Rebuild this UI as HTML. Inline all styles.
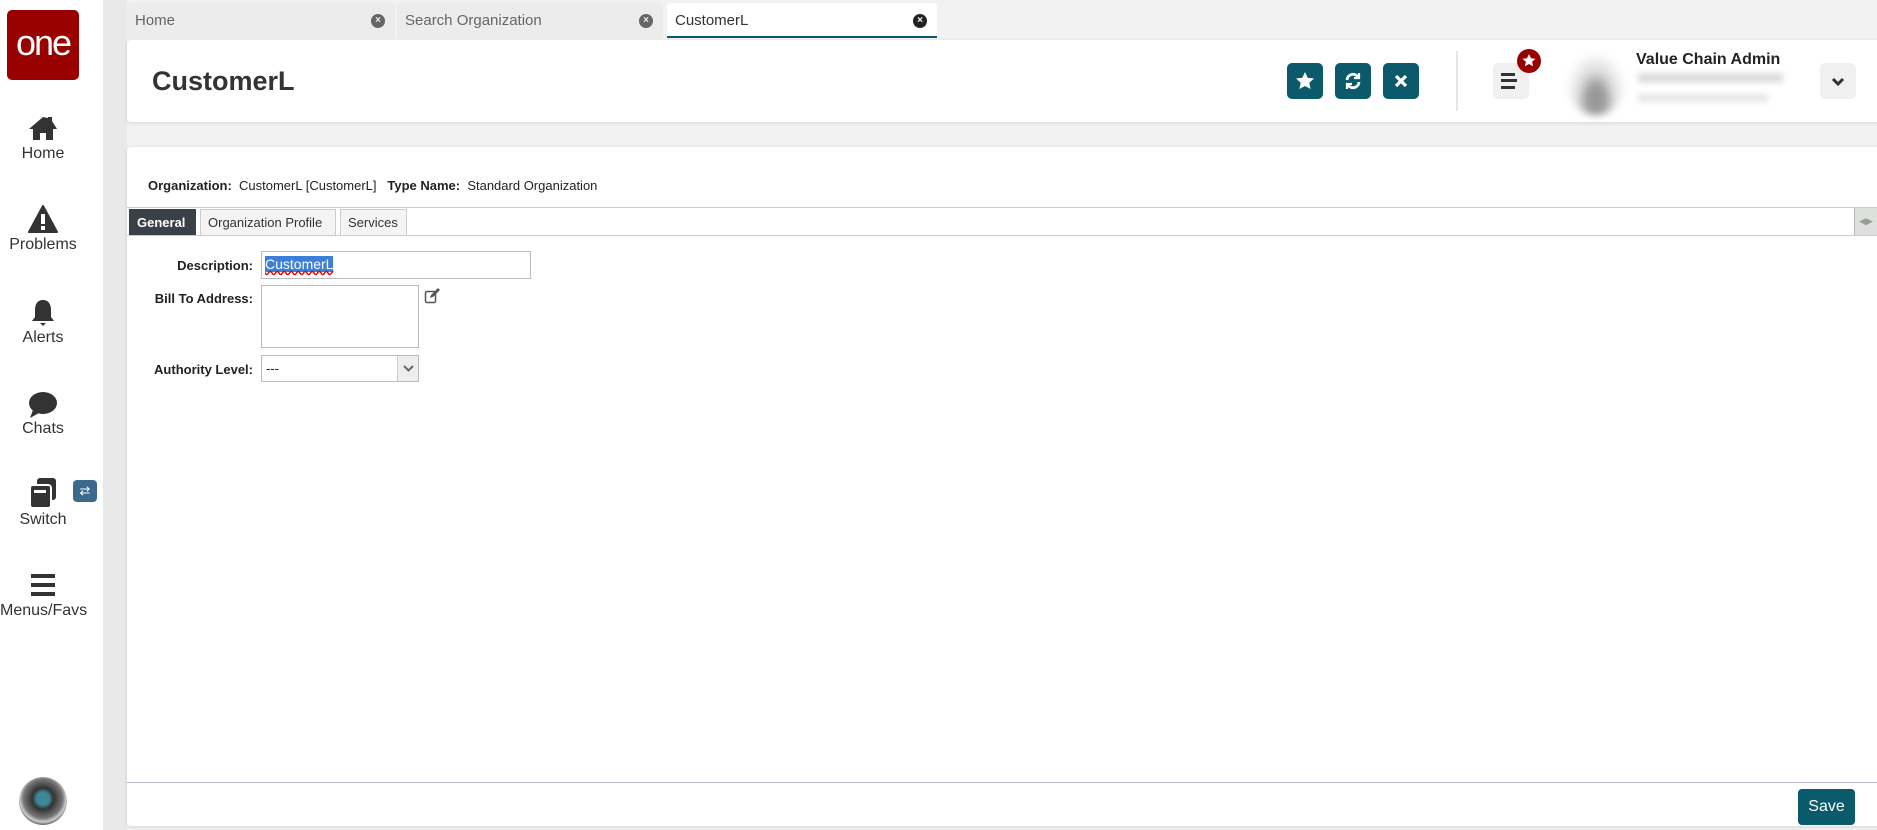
<!DOCTYPE html>
<html><head><meta charset="utf-8"><style>
*{box-sizing:border-box;margin:0;padding:0}
body{width:1877px;height:830px;overflow:hidden;background:#f2f2f2;font-family:"Liberation Sans",sans-serif;color:#222;position:relative}
.abs{position:absolute}
.side{left:0;top:0;width:103px;height:830px;background:#fff}
.strip{left:103px;top:0;width:24px;height:830px;background:#e9e9e9}
.logo{left:7px;top:10px;width:72px;height:70px;background:#990000;border-radius:5px;color:#fff;font-size:36px;text-align:center;line-height:66px;letter-spacing:-2px}
.nav{left:0;width:86px;text-align:center;font-size:16px;color:#333}
.nav svg{display:block;margin:0 auto 2px}
.tab{top:3px;height:35px;background:#ececec;border-radius:4px 4px 0 0;font-size:15px;color:#666;padding:9px 8px}
.tab .x{position:absolute;right:10px;top:11px;width:14px;height:14px;border-radius:50%;background:#666;color:#eee;font-size:10px;line-height:14px;text-align:center;font-weight:bold}
.card{background:#fff;border-radius:4px;box-shadow:0 1px 4px rgba(0,0,0,.12)}
.btn{top:63px;width:36px;height:36px;background:#0b5a6b;border-radius:5px}
.btn svg{display:block;margin:8px auto}
.lbl{font-size:13px;font-weight:bold;text-align:right;width:140px;left:113px}
.ftab{top:209px;height:26px;border:1px solid #ccc;border-bottom:none;background:#f4f4f4;font-size:13px;padding:5px 7px;color:#333}
</style></head><body>
<div class="abs side"></div>
<div class="abs strip"></div>
<div class="abs logo">one</div>

<div class="abs nav" style="top:115px"><svg width="30" height="26" viewBox="0 0 30 26"><path d="M15 2L1 14h4v11h7v-7h6v7h7V14h4L24 6V2h-4v1z" fill="#333"/></svg></div>
<div class="abs nav" style="top:145px">Home</div>
<div class="abs nav" style="top:205px"><svg width="30" height="28" viewBox="0 0 30 28"><path d="M15 1L1 27h28z" fill="#333" stroke="#333" stroke-linejoin="round" stroke-width="2"/><rect x="13" y="9" width="4" height="10" fill="#fff"/><rect x="13" y="21" width="4" height="4" fill="#fff"/></svg></div>
<div class="abs nav" style="top:236px">Problems</div>
<div class="abs nav" style="top:299px"><svg width="26" height="28" viewBox="0 0 26 28"><path d="M13 1c-6 0-8 5-8 10v7l-3 4h22l-3-4v-7c0-5-2-10-8-10z" fill="#333"/><path d="M10 24h6l-3 3z" fill="#333"/></svg></div>
<div class="abs nav" style="top:329px">Alerts</div>
<div class="abs nav" style="top:391px"><svg width="32" height="28" viewBox="0 0 32 28"><ellipse cx="16" cy="12" rx="14" ry="11" fill="#333"/><path d="M6 19l-3 8 9-5z" fill="#333"/></svg></div>
<div class="abs nav" style="top:420px">Chats</div>
<div class="abs nav" style="top:477px"><svg width="30" height="32" viewBox="0 0 30 32"><rect x="9" y="1" width="19" height="22" rx="3" fill="#333"/><rect x="2" y="8" width="21" height="23" rx="3" fill="#333" stroke="#fff" stroke-width="2"/><rect x="6" y="13" width="12" height="3" fill="#fff"/></svg></div>
<div class="abs" style="left:73px;top:480px;width:24px;height:22px;background:#3b6a8c;border-radius:4px;color:#fff;font-size:13px;text-align:center;line-height:22px">⇄</div>
<div class="abs nav" style="top:511px">Switch</div>
<div class="abs nav" style="top:572px"><svg width="28" height="26" viewBox="0 0 28 26"><rect x="2" y="2" width="24" height="4" fill="#333"/><rect x="2" y="11" width="24" height="4" fill="#333"/><rect x="2" y="20" width="24" height="4" fill="#333"/></svg></div>
<div class="abs nav" style="top:602px">Menus/Favs</div>
<div class="abs" style="left:19px;top:777px;width:48px;height:48px;border-radius:50%;background:radial-gradient(circle at 50% 45%,#3d8796 0 18%,#333 30%,#777 55%,#ccc 65%,#333 78%)"></div>

<div class="abs tab" style="left:127px;width:268px">Home<span class="x">×</span></div>
<div class="abs tab" style="left:397px;width:266px">Search Organization<span class="x">×</span></div>
<div class="abs tab" style="left:667px;width:270px;background:#fff;color:#333;border-bottom:2px solid #0b5a6b">CustomerL<span class="x" style="background:#222;color:#fff">×</span></div>

<div class="abs card" style="left:127px;top:40px;width:1760px;height:82px"></div>
<div class="abs" style="left:152px;top:66px;font-size:27px;font-weight:bold;color:#333">CustomerL</div>
<div class="abs btn" style="left:1287px"><svg width="20" height="20" viewBox="0 0 20 20"><path d="M10 1l2.7 5.8 6.3.7-4.7 4.3 1.3 6.2L10 15l-5.6 3 1.3-6.2L1 7.5l6.3-.7z" fill="#fff"/></svg></div>
<div class="abs btn" style="left:1335px"><svg width="20" height="20" viewBox="0 0 20 20" fill="none" stroke="#fff" stroke-width="2.8"><path d="M4 9a6 6 0 0 1 11-3"/><path d="M16 11a6 6 0 0 1-11 3"/><path d="M16 2v5h-5M4 18v-5h5" stroke-width="2.2"/></svg></div>
<div class="abs btn" style="left:1383px"><svg width="20" height="20" viewBox="0 0 20 20" stroke="#fff" stroke-width="3.2"><path d="M5 5l10 10M15 5L5 15"/></svg></div>
<div class="abs" style="left:1456px;top:51px;width:2px;height:60px;background:#e6e6e6"></div>
<div class="abs" style="left:1493px;top:63px;width:36px;height:36px;background:#f0f0f0;border-radius:5px"><svg width="36" height="36" viewBox="0 0 36 36"><rect x="8" y="10" width="14" height="3" fill="#333"/><rect x="8" y="16" width="16" height="3" fill="#333"/><rect x="8" y="23" width="14" height="3" fill="#333"/></svg></div>
<div class="abs" style="left:1517px;top:49px;width:24px;height:24px;border-radius:50%;background:#990000"><svg width="24" height="24" viewBox="0 0 24 24"><path d="M12 5l2 4.3 4.5.5-3.4 3 1 4.5L12 15l-4.1 2.3 1-4.5-3.4-3 4.5-.5z" fill="#fff"/></svg></div>
<div class="abs" style="left:1568px;top:55px;width:56px;height:60px;border-radius:50%;background:radial-gradient(ellipse at 50% 75%,#999 0 22%,#ddd 45%,#f6f6f6 70%);filter:blur(4px)"></div>
<div class="abs" style="left:1636px;top:51px;font-size:16px;font-weight:bold;color:#222">Value Chain Admin</div>
<div class="abs" style="left:1638px;top:73px;width:145px;height:10px;background:#ddd;filter:blur(3px)"></div>
<div class="abs" style="left:1638px;top:94px;width:130px;height:8px;background:#e6e6e6;filter:blur(3px)"></div>
<div class="abs" style="left:1820px;top:63px;width:36px;height:36px;background:#f0f0f0;border-radius:5px"><svg width="36" height="36" viewBox="0 0 36 36"><path d="M13 16l5 5 5-5" fill="none" stroke="#333" stroke-width="3"/></svg></div>

<div class="abs card" style="left:127px;top:147px;width:1760px;height:679px"></div>
<div class="abs" style="left:148px;top:178px;font-size:13px"><b>Organization:</b>&nbsp; CustomerL [CustomerL]&nbsp;&nbsp; <b>Type Name:</b>&nbsp; Standard Organization</div>
<div class="abs" style="left:127px;top:207px;width:1750px;height:1px;background:#ccc"></div>
<div class="abs" style="left:127px;top:235px;width:1750px;height:1px;background:#ccc"></div>
<div class="abs ftab" style="left:129px;width:67px;background:#3a4048;color:#fff;font-weight:bold;border-color:#3a4048">General</div>
<div class="abs ftab" style="left:200px;width:136px">Organization Profile</div>
<div class="abs ftab" style="left:340px;width:67px">Services</div>
<div class="abs" style="left:1854px;top:208px;width:23px;height:27px;background:#dde0dd;border-left:1px solid #bbb;color:#999;font-size:9px;line-height:27px;text-align:center">◀▶</div>

<div class="abs lbl" style="top:258px">Description:</div>
<div class="abs" style="left:261px;top:251px;width:270px;height:28px;border:1px solid #bbb;padding:4px 3px;font-size:14px"><span style="background:#3b7fd9;color:#fff;text-decoration:underline wavy #d00">CustomerL</span></div>
<div class="abs lbl" style="top:291px">Bill To Address:</div>
<div class="abs" style="left:261px;top:285px;width:158px;height:63px;border:1px solid #bbb"></div>
<svg class="abs" style="left:424px;top:288px" width="16" height="16" viewBox="0 0 16 16"><rect x="1.5" y="3.5" width="10" height="11" rx="1.5" fill="none" stroke="#555" stroke-width="1.5"/><path d="M6 10l1-3 7-7 2 2-7 7z" fill="#555"/></svg>
<div class="abs lbl" style="top:362px">Authority Level:</div>
<div class="abs" style="left:261px;top:355px;width:158px;height:27px;border:1px solid #bbb;font-size:13px;padding:5px 4px">---</div>
<div class="abs" style="left:397px;top:356px;width:21px;height:25px;background:#eee;border-left:1px solid #ccc"><svg width="21" height="25" viewBox="0 0 21 25"><path d="M6 10l4.5 4.5L15 10" fill="none" stroke="#666" stroke-width="2"/></svg></div>

<div class="abs" style="left:127px;top:782px;width:1750px;height:1px;background:#b8bccc"></div>
<div class="abs" style="left:1798px;top:789px;width:57px;height:36px;background:#0b5a6b;border-radius:4px;color:#fff;font-size:16px;text-align:center;line-height:36px">Save</div>
</body></html>
